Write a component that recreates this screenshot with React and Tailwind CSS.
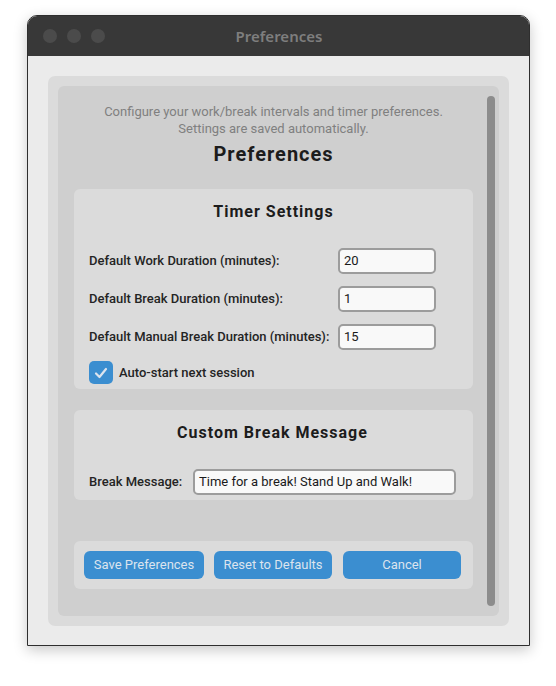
import React from "react";

function Field({ value, className }) {
  return (
    <div
      className={
        "h-[26px] rounded-[5px] border-2 border-[#9c9c9c] bg-[#f9f9f9] pl-[4px] flex items-center text-[13px] text-[#1a1a1a] whitespace-nowrap " +
        className
      }
    >
      {value}
    </div>
  );
}

export default function App() {
  const rows = [
    ["Default Work Duration (minutes):", "20"],
    ["Default Break Duration (minutes):", "1"],
    ["Default Manual Break Duration (minutes):", "15"],
  ];
  return (
    <div className="w-[556px] h-[686px] bg-white overflow-hidden pt-[15px] pl-[27px]" style={{ fontFamily: "Roboto, 'Noto Sans', sans-serif" }}>
      <div className="w-[503px] rounded-t-[10px] border border-[#2e2e2e] shadow-[0_4px_14px_rgba(0,0,0,0.22)] overflow-hidden">
        {/* title bar */}
        <div className="h-[40px] bg-[#383838] relative flex items-center justify-center">
          <div className="absolute left-[15px] top-[13px] flex gap-[10px]">
            <div className="w-[14px] h-[14px] rounded-full bg-[#4b4b4b]" />
            <div className="w-[14px] h-[14px] rounded-full bg-[#4b4b4b]" />
            <div className="w-[14px] h-[14px] rounded-full bg-[#4b4b4b]" />
          </div>
          <span className="text-[15px] font-semibold text-[#7e7e7e] ml-[1px]" style={{ fontFamily: "'Noto Sans', sans-serif" }}>
            Preferences
          </span>
        </div>
        {/* body */}
        <div className="bg-[#ebebeb] pt-[20px] pb-[19px] px-[20px]">
          <div className="h-[550px] bg-[#dbdbdb] rounded-[7px] p-[10px]">
            <div className="h-[530px] bg-[#cfcfcf] rounded-[6px] flex overflow-hidden">
              <div className="flex-1 pl-[16px] pr-[14px] pt-[17px] flex flex-col">
                <p className="text-center text-[13px] leading-[17px] text-[#808080]">
                  Configure your work/break intervals and timer preferences.
                  <br />
                  Settings are saved automatically.
                </p>
                <h1 className="mt-[3px] text-center text-[20px] leading-[28px] font-bold text-[#1c1c1c] tracking-[1px]">
                  Preferences
                </h1>

                {/* Timer settings */}
                <div className="mt-[21px] bg-[#dbdbdb] rounded-[6px] pt-[11px] pb-[5px] pl-[15px]">
                  <h2 className="text-center text-[16px] leading-[24px] font-bold text-[#1c1c1c] tracking-[1px] pr-[15px]">
                    Timer Settings
                  </h2>
                  <div className="mt-[24px] grid grid-cols-[249px_98px] gap-y-[12px]">
                    {rows.map(([label, val]) => (
                      <React.Fragment key={label}>
                        <div className="flex items-center text-[13px] text-[#242424] font-medium whitespace-nowrap">{label}</div>
                        <Field value={val} className="" />
                      </React.Fragment>
                    ))}
                  </div>
                  <div className="mt-[11px] flex items-center gap-[6px]">
                    <div className="w-[24px] h-[23px] rounded-[5px] bg-[#3b8ed0] flex items-center justify-center">
                      <svg width="14" height="12" viewBox="0 0 14 12" fill="none">
                        <path d="M2 6.5 L5.5 10 L12 2" stroke="#dce4ee" strokeWidth="2.2" strokeLinecap="round" strokeLinejoin="round" />
                      </svg>
                    </div>
                    <span className="text-[13px] text-[#242424] font-medium whitespace-nowrap">Auto-start next session</span>
                  </div>
                </div>

                {/* Custom break message */}
                <div className="mt-[21px] bg-[#dbdbdb] rounded-[6px] pt-[11px] pb-[5px] pl-[15px] pr-[17px]">
                  <h2 className="text-center text-[16px] leading-[24px] font-bold text-[#1c1c1c] tracking-[1px]">
                    Custom Break Message
                  </h2>
                  <div className="mt-[24px] flex items-center">
                    <span className="w-[104px] shrink-0 text-[13px] text-[#242424] font-medium whitespace-nowrap">Break Message:</span>
                    <Field value="Time for a break! Stand Up and Walk!" className="flex-1" />
                  </div>
                </div>

                {/* Buttons */}
                <div className="mt-[41px] bg-[#dbdbdb] rounded-[6px] p-[10px] flex gap-[10px]">
                  <button className="w-[120px] h-[28px] rounded-[6px] bg-[#3b8ed0] text-[13px] text-[#dce4ee] whitespace-nowrap">
                    Save Preferences
                  </button>
                  <button className="w-[118px] h-[28px] rounded-[6px] bg-[#3b8ed0] text-[13px] text-[#dce4ee] whitespace-nowrap">
                    Reset to Defaults
                  </button>
                  <button className="ml-[1px] w-[118px] h-[28px] rounded-[6px] bg-[#3b8ed0] text-[13px] text-[#dce4ee]">
                    Cancel
                  </button>
                </div>
              </div>
              {/* scrollbar */}
              <div className="w-[8px] mr-[4px] my-[10px] rounded-full bg-[#8c8c8c]" />
            </div>
          </div>
        </div>
      </div>
    </div>
  );
}
